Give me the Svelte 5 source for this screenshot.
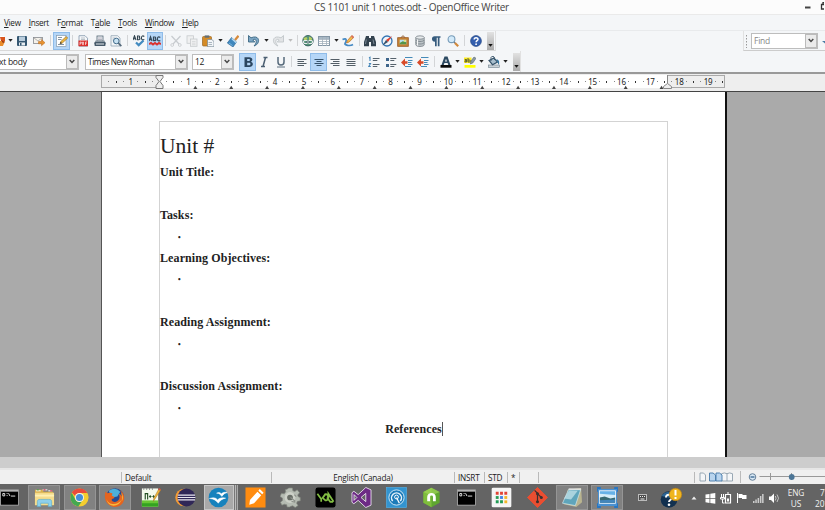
<script>
  // Toolbar glyphs, drawn on a 12 x 12 grid
  const glyphs = {
    newdoc: '<rect x="1" y="1" width="8" height="10" fill="#fff"/><path d="M5 2h5v4H6z" fill="#d8541c"/><path d="M5 6h5l-2 5H5z" fill="#e98d2b"/><path d="M6 5l4 2-2 1z" fill="#963012"/>',
    save: '<rect x="1" y="1" width="10" height="10" rx="1" fill="#355873"/><rect x="3" y="1.500" width="6" height="4.500" fill="#b9cddd"/><rect x="3" y="7.500" width="6" height="3" fill="#e7edf2"/><rect x="4" y="8" width="1.500" height="2.500" fill="#355873"/>',
    mail: '<rect x=".5" y="2.500" width="9" height="6" fill="#f4f1ea" stroke="#85898e" stroke-width=".8"/><path d="M.6 2.700L5 6l4.400-3.300" fill="none" stroke="#999" stroke-width=".7"/><path d="M5.500 6.500h3V4.500l3.500 3.200-3.500 3V8.800h-3z" fill="#e8932f" stroke="#b6651b" stroke-width=".5"/>',
    edit: '<rect x=".5" y=".5" width="9.500" height="11" fill="#fff" stroke="#889db0" stroke-width=".7"/><path d="M2 2.500h4M2 4.500h3.500M2 9.500h6" stroke="#66798a" stroke-width=".8"/><path d="M4 8.800l.8-2.300 5.400-5 1.500 1.600-5.400 5z" fill="#efb73d" stroke="#8d6620" stroke-width=".6"/><path d="M4 8.800l.7-2 1.300 1.400z" fill="#333"/>',
    pdf: '<path d="M2 .7h6l2.500 2.500v8H2z" fill="#f5f7f9" stroke="#8096a9" stroke-width=".8"/><path d="M4 3h4M4 4.500h4" stroke="#a0abb5" stroke-width=".7"/><rect x="1.500" y="5.500" width="9.500" height="5.700" fill="#db2e2b"/><path d="M3 10V7h1.300v1.300H3M5.500 7v2.700h1V7zM8.500 10V7h1.500M8.500 8.500h1" stroke="#fff" stroke-width=".6" fill="none"/>',
    print: '<rect x="3" y="1" width="6" height="5" fill="#f4f6f8" stroke="#526473" stroke-width=".8"/><path d="M4 3h4M4 4.500h4" stroke="#889" stroke-width=".6"/><path d="M1.500 5.500h9L12 9H0z" fill="#8b98a2"/><rect x=".5" y="7" width="11" height="4" rx=".7" fill="#475b6b"/><path d="M2 9h8" stroke="#e5eaee"/>',
    preview: '<path d="M1 .7h6.500L10 3v8H1z" fill="#f2f5f7" stroke="#93a4b2" stroke-width=".8"/><path d="M2.500 3h3M2.500 5h1.500" stroke="#9eabb5" stroke-width=".7"/><circle cx="6.300" cy="6" r="2.800" fill="#c8e2f2" stroke="#426c8c"/><path d="M8.300 8l3 3.200" stroke="#54697a" stroke-width="1.700"/>',
    spell: '<path d="M0 5L1.500.8 3 5M.5 3.700h2M4.500 1v3.700h1.300c1.600 0 1.500-1.700 0-1.900 1.200-.2 1.100-1.800 0-1.800zM11.300 1.500C9.500.2 8.400 1.300 8.400 2.900s1.300 2.700 2.900 1.500" fill="none" stroke="#314450" stroke-width="1.100"/><path d="M3 7.500l2.700 2.600L10.500 5.500" fill="none" stroke="#438bc0" stroke-width="2.200"/>',
    auto: '<path d="M0 6L1.500 1.800 3 6M.5 4.700h2M4.500 2v3.700h1.300c1.600 0 1.500-1.700 0-1.900 1.200-.2 1.100-1.800 0-1.800zM11.300 2.500C9.500 1.200 8.400 2.300 8.400 3.900s1.300 2.700 2.900 1.500" fill="none" stroke="#35495a" stroke-width="1.200"/><path d="M0 9l2-1 2 1.500L6 8l2 1.500L10 8l2 1" fill="none" stroke="#da3330" stroke-width="2"/>',
    cut: '<path d="M1.500 1l7.500 8M10.500 1L3 9" stroke="#c7cbcf" stroke-width="1.200"/><circle cx="2.200" cy="10" r="1.400" fill="none" stroke="#cdd0d3"/><circle cx="9.800" cy="10" r="1.400" fill="none" stroke="#cdd0d3"/>',
    copy: '<rect x="1" y=".8" width="6.500" height="7.500" fill="#eff0f1" stroke="#c7cacd" stroke-width=".8"/><rect x="4.500" y="4" width="6.500" height="7.300" fill="#eff0f1" stroke="#c7cacd" stroke-width=".8"/><path d="M6 6.500h3.500M6 8.200h3.500M6 9.700h3.500" stroke="#d0d2d4" stroke-width=".7"/>',
    paste: '<rect x=".5" y="1.500" width="9" height="9.500" rx="1" fill="#d48b27" stroke="#9b6824" stroke-width=".7"/><rect x="2.700" y=".4" width="4.600" height="2.300" fill="#636e75"/><path d="M5.500 4.500h4.300L12 6.500v5.200H5.500z" fill="#f2f5f8" stroke="#768895" stroke-width=".7"/><path d="M6.500 7.500H10M6.500 9.500H10" stroke="#8d9ca7" stroke-width=".7"/>',
    brush: '<path d="M11.500.8L8 5" stroke="#d78a3b" stroke-width="2.200"/><path d="M4.500 2.500l5 4.500-3.500 5L.3 8z" fill="#3f87bd" stroke="#245f91" stroke-width=".6"/><path d="M4.700 3.500L9.300 7.700" stroke="#b9ddf4" stroke-width="1.300"/><path d="M2 8l3.500 2.500" stroke="#75b4df"/>',
    undo: '<path d="M.5.500v6.500h6.300L4.800 5C8 2.800 10 7 6 11 13 9 12-1 3 2.800z" fill="#7ca6c4" stroke="#3a6682" stroke-width=".9"/>',
    redo: '<path d="M11.500.5v6.500H5.200L7.200 5C4 2.800 2 7 6 11-1 9 0-1 9 2.800z" fill="#e2e4e6" stroke="#c1c6c9" stroke-width=".9"/>',
    globe: '<circle cx="6" cy="5.700" r="5.200" fill="#559579" stroke="#375e60" stroke-width=".9"/><path d="M1.500 3l3-1 1 2-3 2zM7 1.500l3 1.500-.5 3L7 5z" fill="#b6cf63"/><path d="M2.500 8.500a1.600 1.600 0 0 1 0-3h2a1.600 1.600 0 0 1 0 3zM7.500 8.500a1.600 1.600 0 0 1 0-3h2a1.600 1.600 0 0 1 0 3z" fill="none" stroke="#e9ecee" stroke-width="1.100"/><path d="M4 7h4" stroke="#344f5b"/>',
    table: '<rect x=".5" y="1.500" width="11" height="9" fill="#fff" stroke="#8496a5"/><rect x="1" y="2" width="10" height="2" fill="#a8b8c5"/><path d="M.5 4.500h11M.5 6.500h11M.5 8.500h11M4.500 2V11M8.500 2V11" stroke="#a2b0bb" stroke-width=".8"/>',
    draw: '<path d="M.5 4.500C6 2 4 7 3 8.500S8 11.500 11 9.500" fill="none" stroke="#4589c3" stroke-width="1.700"/><path d="M4.500 8l1-2.500 4.300-5 2 1.800L7.200 7z" fill="#f2b94c" stroke="#b86f27" stroke-width=".7"/><path d="M9 1.500l1-1.200 2 1.800-1 1.200z" fill="#da6d62"/>',
    find: '<path d="M2 1h3v2h2V1h3l2 6v4.200H7V7H5v4.200H0V7z" fill="#34434f"/><path d="M2.300 4.500L1.500 9M9 4.500l1 4.500" stroke="#8c9ba7" stroke-width=".8"/>',
    compass: '<circle cx="6" cy="6" r="5" fill="#eef4fa" stroke="#3475b3" stroke-width="1.300"/><path d="M11 1L7 7 5 5z" fill="#e43b28"/><path d="M1.500 10.500L5 5l2 2z" fill="#375069"/>',
    gallery: '<path d="M3.500 3L6 .7 8.500 3" fill="none" stroke="#926135"/><rect x=".7" y="2.700" width="10.600" height="8.600" fill="#c78432" stroke="#985620" stroke-width=".8"/><rect x="2.700" y="4.700" width="6.600" height="4.500" fill="#b8dfed"/><path d="M2.700 9.200V8l3-1.700 3.600 1v1.900z" fill="#559548"/><circle cx="7.800" cy="5.800" r=".9" fill="#f9e54d"/>',
    database: '<path d="M1.800 2.500v7.400C2.500 12 9.500 12 10.200 9.900V2.500" fill="#bcc3c7" stroke="#788288" stroke-width=".8"/><ellipse cx="6" cy="2.500" rx="4.200" ry="1.700" fill="#e6eaec" stroke="#788288" stroke-width=".8"/><path d="M1.800 5c.7 2 7.700 2 8.400 0M1.800 7.500c.7 2 7.700 2 8.400 0" fill="none" stroke="#737e85" stroke-width=".8"/><path d="M3.500 4.500v6" stroke="#f5f6f6"/>',
    pilcrow: '<path d="M10.500 1.200H4.600C1 1.200 1.100 6.700 5 6.700v4.600h1.700V2.700h1.100v8.600h1.700V2.700h1z" fill="#365c7e"/>',
    zoom: '<circle cx="4.500" cy="4.200" r="3.400" fill="#d2eafa" stroke="#769bb8" stroke-width="1.100"/><path d="M7 7l1.500 1.500" stroke="#6c7b86" stroke-width="1.200"/><path d="M8 8l3.200 3.200" stroke="#d2893c" stroke-width="2.200"/>',
    help: '<circle cx="6" cy="6" r="5.400" fill="#345fae" stroke="#234583" stroke-width=".7"/><path d="M4.200 4.600C4.200 2 8 2.300 8 4.200 8 5.700 6.100 5.600 6.100 7.300" fill="none" stroke="#fff" stroke-width="1.500"/><circle cx="6.100" cy="9.200" r=".9" fill="#fff"/>',
    bold: '<path fill-rule="evenodd" d="M2.500 1.200h4.700c4 0 3.900 4 1.500 4.500C12 6.300 11.500 11 7.300 11H2.500zM5.200 3v2h1.500C8.500 5 8.500 3 6.700 3zm0 3.700v2.500H7c2 0 2-2.500 0-2.500z" fill="#2b4660"/>',
    italic: '<path d="M5.500 1.500h4M3 10.500h4M7.500 1.500l-2.500 9" fill="none" stroke="#4b5f72" stroke-width="1.500"/>',
    underline: '<path d="M3 1v5c0 4 6 4 6 0V1" fill="none" stroke="#566a7b" stroke-width="1.500"/><path d="M2 11h8" stroke="#5c6f7f"/>',
    left: '<path d="M1.500 3.500h9M1.500 5.500h6.500M1.500 7.500h9M1.500 9.500h6.500" stroke="#535e67" stroke-width="1.200"/>',
    center: '<path d="M1.500 3.500h9M3.500 5.500h5M1.500 7.500h9M3.500 9.500h5" stroke="#36536d" stroke-width="1.200"/>',
    right: '<path d="M1.500 3.500h9M4 5.500h6.500M1.500 7.500h9M4 9.500h6.500" stroke="#535e67" stroke-width="1.200"/>',
    justify: '<path d="M1.500 3.500h9M1.500 5.500h9M1.500 7.500h9M1.500 9.500h9" stroke="#535e67" stroke-width="1.200"/>',
    numbers: '<path d="M1 2l1-.7V5M.8 7.500h1.700L.8 10.500h2" fill="none" stroke="#4485b8" stroke-width="1.100"/><path d="M4.800 2.500h6.700M4.800 4.500h4.500M4.800 8.500h6.700M4.800 10.500h4.500" stroke="#56626c"/>',
    bullets: '<path d="M1 2h3v3H1zM1 8h3v3H1z" fill="#3d648a"/><path d="M5.300 2.500h6M5.300 4.500h4M5.300 8.500h6M5.300 10.500h4" stroke="#56626c"/>',
    outdent: '<path d="M4 1.500h7.500M7 4.500h4.500M7 6.500h3.500M7 8.500h4.500M4 10.500h6" stroke="#458ab8" stroke-width="1.200"/><path d="M0 6.500L4 2.500v2.700h2.500v2.600H4v2.700z" fill="#d84a28"/>',
    indent: '<path d="M4 1.500h7.500M7 4.500h4.500M7 6.500h3.500M7 8.500h4.500M4 10.500h6" stroke="#458ab8" stroke-width="1.200"/><path d="M0 6.500L4 2.500v2.700h2.500v2.600H4v2.700z" fill="#d84a28"/>',
    fontcolor: '<path fill-rule="evenodd" d="M4.500.5h3L10.500 9H8.300L7.600 7H4.400l-.7 2H1.500zM6 2.800L5 5.400h2z" fill="#2c4961"/><rect x=".5" y="9" width="11" height="2.700" fill="#0a0a0a"/>',
    highlight: '<rect x=".5" y="9" width="11" height="2.700" fill="#ffff00"/><rect x="0" y="1.500" width="7.500" height="5.500" fill="#ffed22"/><path d="M.8 3.500h1.800V6H1V4.700h1.400M4 2v4h1.300c1.500 0 1.500-2 0-2H4" fill="none" stroke="#4e5637" stroke-width=".9"/><path d="M6.300 8l.7-3 3-4 2 1.300-3 4.500z" fill="#8b9aa4" stroke="#58676f" stroke-width=".6"/>',
    bucket: '<rect x=".5" y="9" width="11" height="2.500" fill="#c9d1d7" stroke="#71828e" stroke-width=".6"/><path d="M1 4.500L6 2l3.500 4L4.500 8.700z" fill="#a9bfce" stroke="#36536a" stroke-width="1.200"/><path d="M3 5V1.500C3.500-.3 6.500.2 6.500 2v2" fill="none" stroke="#415c70"/><path d="M8.500 3.300c2.700.5 3 2.500 2.500 5.500-1.500-1-1-2.700-2-3.500z" fill="#3978a4"/>'
  };

  // [name, slot width, state]
  const standardBar = [
    ['newdoc', 15], ['arrow', 5], ['save', 18], ['mail', 16], ['sep', 6], ['edit', 17, 'on'], ['sep', 5],
    ['pdf', 16], ['print', 17], ['preview', 16], ['sep', 7], ['spell', 16], ['auto', 16, 'on'], ['sep', 5],
    ['cut', 16], ['copy', 16], ['paste', 16], ['arrow', 9], ['brush', 16], ['sep', 5], ['undo', 16], ['arrow', 8],
    ['redo', 16], ['arrow', 8, 'dim'], ['sep', 6], ['globe', 16], ['table', 16], ['arrow', 8], ['draw', 16],
    ['sep', 6], ['find', 16], ['compass', 17], ['gallery', 16], ['database', 17], ['pilcrow', 16], ['zoom', 17],
    ['sep', 6], ['help', 17]
  ];
  const formatBar = [
    ['bold', 17, 'on'], ['italic', 16], ['underline', 17], ['sep', 5], ['left', 16], ['center', 17, 'on'],
    ['right', 16], ['justify', 16], ['sep', 6], ['numbers', 17], ['bullets', 17], ['outdent', 16], ['indent', 16],
    ['sep', 6], ['fontcolor', 17], ['arrow', 7], ['highlight', 17], ['arrow', 7], ['bucket', 17], ['arrow', 7]
  ];

  const menus = [['V', 'iew', ''], ['I', 'nsert', ''], ['o', 'rmat', 'F'], ['a', 'ble', 'T'], ['T', 'ools', ''], ['W', 'indow', ''], ['H', 'elp', '']];

  // Ruler geometry: one unit is 28.87px, default tab stops every 35.86px
  const unit = 28.87;
  const origin = 58.5;
  const rulerMarks = [];
  for (let q = -7; q <= 78; q++) {
    if (q !== 0) rulerMarks.push({ x: origin + (q * unit) / 4, q });
  }
  const tabs = Array.from({ length: 14 }, (_, i) => origin + (i + 1) * 35.86);

  const lines = [
    'Unit Title:', '', 'Tasks:', '•', 'Learning Objectives:', '•', '', 'Reading Assignment:', '•', '',
    'Discussion Assignment:', '•'
  ];

  // Taskbar artwork on a 22 x 22 grid
  const apps = {
    cmd: '<rect x="1.500" y="3" width="19" height="16" fill="#000" stroke="#b9b9b9" stroke-width=".8"/><rect x="2" y="3.300" width="18" height="1.500" fill="#ccc"/><path d="M4 6.800h2v2.500H4zM8 6.800h1M8 9h1M10 6.500l1.500 3M12.500 9.500h4.500" fill="none" stroke="#e4e4e4" stroke-width="1"/>',
    explorer: '<path d="M1 3h8l1 2h10v14H1z" fill="#d9ae4b"/><path d="M2 4h5M9 3h5M15 4h4" stroke="#fff"/><path d="M3 3h2" stroke="#37a84a"/><path d="M10 3h2M17 4h2" stroke="#d24"/><path d="M1 6h20v13H1z" fill="#f5dc8c"/><path d="M1 9h20" stroke="#fff0b4" stroke-width="2"/><path d="M3.500 20.500v-5c0-2 1-2.500 3-2.500h9c2 0 3 .5 3 2.500v5h-3.500v-3.500H7v3.500z" fill="#8ed0eb" stroke="#5eafcf" stroke-width=".7"/>',
    chrome: '<circle cx="11" cy="11" r="9.500" fill="#f4cd2f"/><path d="M11 1.500a9.500 9.500 0 0 1 8.200 4.700H11a4.800 4.800 0 0 0-4.600 3.300L3 5.800A9.500 9.500 0 0 1 11 1.500z" fill="#e84b3c"/><path d="M2.900 6A9.500 9.500 0 0 0 9.700 20.400L13.600 15A4.800 4.800 0 0 1 6.800 13.300z" fill="#44a852"/><circle cx="11" cy="11" r="4.700" fill="#f5f5f5"/><circle cx="11" cy="11" r="3.700" fill="#438eda"/>',
    firefox: '<circle cx="11.500" cy="10.500" r="9.300" fill="#244a93"/><path d="M5 4q7-5 12 1l-3 5-6 1z" fill="#4db0dc"/><path d="M1.500 5L4 6.500C6 5.500 8 6 9 7L8 9l3 1.500c-.5 2.500-3 1-3 3.500 2 3 7 1.500 8-2 .7-2.500 0-4-.5-5 1.500 0 2.500 1.500 3 3 .5-3-.5-5-2-6.500C23 6.500 23 18 14.500 20.500 5 22.500-1 15 1.500 5z" fill="#e4641f"/><path d="M2.500 12c2 8 12 7 15.500 2-2 7-14 8.500-15.500-2zM18 6c2.500 3 2 7 .5 9 .5-3 .5-6-.5-9z" fill="#f8b83c"/>',
    notepadpp: '<path d="M2 1.500h17v19H2z" fill="#f4faed"/><path d="M2 14h17v6.500H2z" fill="#69c735"/><path d="M2 17h17v3.500H2z" fill="#34a321"/><path d="M4 1v2M7 1v2M10 1v2M13 1v2" stroke="#888"/><path d="M5.500 13V7h2.500v6M9.500 10h2.500M10.700 8.700v2.600M13 10h2.500M14.200 8.700v2.600" fill="none" stroke="#245123" stroke-width="1.200"/><path d="M14 15l.5-3.500L20 1.500l2 1.300-6.500 10z" fill="#f0b638" stroke="#9d7124" stroke-width=".5"/><path d="M19 2.500l1-1.500 2 1.300-1 1.500z" fill="#c6514b"/>',
    eclipse: '<circle cx="9.500" cy="11" r="9.200" fill="#f29a34"/><circle cx="12" cy="11" r="9.400" fill="#302757"/><path d="M3 8.500h18M2.700 11h18.700M3 13.500h18" stroke="#e8e6ef" stroke-width="1.300"/>',
    writer: '<circle cx="11" cy="11" r="10.300" fill="#1682bd"/><path d="M9 6.500c2-1.500 3.700-.8 5 .7 1.700-1.800 3.500-2 6-1.300-2.400.3-4 1.800-5.500 4-1.300-2-3-3.500-5.500-3.400zM1.500 12c4.500-1.500 7-.7 8.500 1.500 2-2.200 5-2.700 8.500-1.800-3.500.6-6 2.500-7.700 5.300C8.500 14 6 12.500 1.500 12z" fill="#fff" stroke="#fff" stroke-width=".5"/>',
    pencil: '<rect x=".5" y=".5" width="21" height="21" fill="#ff8c10"/><path d="M4.500 18.500l.7-5L13 5l4 3.700-7.500 8.300zM14 4l1.500-1.800 4 3.700L18 7.700z" fill="#fff"/>',
    gear: '<path d="M9 1h4l.5 3 2 .8L18 3l2.500 3-2 2.500.7 1.800 2 .7v3.500l-3 .5-.8 2 1.500 2.500-3 2-2.500-1.800-2 .5L10 21H7.500L7 18.500 4.500 18 2 19l-1.500-3L2.800 14 2.500 11.500 0 10l1.500-3.300 3 .5L6 5 5.500 3 8 2z" fill="#b5bbb2" stroke="#83887f" stroke-width=".7"/><circle cx="10.500" cy="11" r="5.700" fill="#cdd1c8"/><circle cx="10.500" cy="11" r="3" fill="#686d66"/><path d="M11 11l5 4M15 8l2 2M12 15l4 1" stroke="#8c918a" stroke-width="1.200"/>',
    yda: '<rect x=".5" y=".5" width="21" height="21" rx="2.500" fill="#000"/><path d="M2.500 7l4 5.500v3M11 7L7.500 12M8 11.500l3-4c3.500-.7 3.500 7.500 0 6.500zM19.500 15.500L14 7v5M19 15.500h-3L12.500 11" fill="none" stroke="#82bd43" stroke-width="1.800"/>',
    vs: '<path d="M15.500.5L21 3v16l-5.500 2.500-8-7.500L3 17.500 1 16V6l2-1.500L7.500 8zM3.200 8v6l3-3zM15.500 6.700L10.500 11l5 4.300z" fill="#6d2a85" fill-rule="evenodd" stroke="#f0e7f5" stroke-width=".9"/>',
    dial: '<rect x=".5" y=".5" width="21" height="21" fill="#3394d0" stroke="#51afe6" stroke-width=".7"/><circle cx="11" cy="11" r="8" fill="#1c7bb9" stroke="#e8f4fc" stroke-width=".9"/><path d="M7 14.700a5.200 5.200 0 1 1 8 0" fill="none" stroke="#e8f4fc" stroke-width="1.500"/><circle cx="11" cy="10.500" r="2" fill="none" stroke="#fff"/><path d="M11 11l3 6" stroke="#fff" stroke-width="1.300"/>',
    green: '<path d="M11 .7l8.500 4.500v11.300L11 21.300 2.500 16.500V5.200z" fill="#5fa62f"/><path d="M11 .7v20.600L2.500 16.500V5.200z" fill="#7fbd3c"/><path d="M11 .7l8.500 4.500L11 9 2.500 5.200z" fill="#a2d65a" opacity=".7"/><path d="M6.500 15V10.500c0-5.500 9-5.500 9 0V15h-3v-4.500c0-2-3-2-3 0V15z" fill="#fff"/>',
    grid: '<rect x=".7" y=".7" width="20.600" height="20.600" rx="1.500" fill="#f5f5f5"/><path d="M5 5h3v3H5zM9.500 5h3v3h-3zM14 5h3v3h-3z" fill="#e24334"/><path d="M5 9.500h3v3H5z" fill="#2a9d58"/><path d="M9.500 9.500h3v3h-3z" fill="#3e82e4"/><path d="M14 9.500h3v3h-3z" fill="#f4b728"/><path d="M5 14h3v3H5zM9.500 14h3v3h-3z" fill="#219b55"/><path d="M14 14h3v3h-3z" fill="#f4b728"/>',
    git: '<path d="M11 .5L21.500 11 11 21.500.5 11z" fill="#e94e31" stroke="#e94e31" stroke-width="1" stroke-linejoin="round"/><path d="M8 3.500l3 3v9M11 7l4 4" fill="none" stroke="#3c302e" stroke-width="1.300"/><circle cx="11" cy="7" r="1.600" fill="#3c302e"/><circle cx="15" cy="11" r="1.600" fill="#3c302e"/><circle cx="11" cy="15.500" r="1.600" fill="#3c302e"/>',
    notepad: '<path d="M6 3l14-2 1 15-6 5-13-3z" fill="#b9b48f"/><path d="M7 2.500l12.500.5L14 19.500.500 17z" fill="#5fa5bb" stroke="#d7eaf0" stroke-width=".7"/><path d="M7.500 3.500l9 .5-7 9-7.500-1z" fill="#c3e3ea" opacity=".75"/><path d="M7 2.200h13" stroke="#e6e6e6" stroke-width="1.500"/>',
    picture: '<path d="M1 2h20v18H1z" fill="#4a91d2"/><rect x="2.500" y="4" width="17" height="13" fill="#d5edf8" stroke="#fff" stroke-width=".8"/><path d="M3 4.500h16v4L3 7z" fill="#66b2e7"/><path d="M3 11l5-1 6 2 5-1v5.500H3z" fill="#376a72"/><path d="M3 14l16-1v3.500H3z" fill="#4386bd"/><path d="M0 5V1h4M18 1h4v4M0 17v4h4M18 21h4v-4" fill="none" stroke="#2776c3" stroke-width="2"/>'
  };
  const taskbar = [
    ['cmd', ''], ['explorer', 'open'], ['chrome', 'open'], ['firefox', 'open'], ['notepadpp', ''], ['eclipse', ''],
    ['writer', 'open active'], ['pencil', ''], ['gear', ''], ['yda', ''], ['vs', ''], ['dial', ''], ['green', ''],
    ['cmd', ''], ['grid', ''], ['git', ''], ['notepad', 'open'], ['picture', 'open']
  ];
</script>

{#snippet bar(items)}
  {#each items as [name, width, state]}
    <span class="slot {state ?? ''}" style:width="{width}px">
      {#if name === 'sep'}
        <i class="sep"></i>
      {:else if name === 'arrow'}
        <svg width="5" height="3" viewBox="0 0 5 3"><path d="M.3 0h4.400L2.500 2.800z" fill={state === 'dim' ? '#bbb' : '#222'} /></svg>
      {:else}
        <svg width="12" height="12" viewBox="0 0 12 12">{@html glyphs[name]}</svg>
      {/if}
    </span>
  {/each}
{/snippet}

{#snippet grip()}
  <span class="grip"><svg width="5" height="3" viewBox="0 0 5 3"><path d="M.3 0h4.400L2.500 2.800z" fill="#111" /></svg></span>
{/snippet}

{#snippet combo(text, width, cls)}
  <div class="combo {cls}" style:width="{width}px">
    <span>{text}</span>
    <b><svg width="6" height="5" viewBox="0 0 6 5"><path d="M.7 1L3 3.500 5.300 1" fill="none" stroke="#484848" stroke-width="1.500" /></svg></b>
  </div>
{/snippet}

<div class="window">
  <header class="title">
    <span>CS 1101 unit 1 notes.odt - OpenOffice Writer</span>
    <svg class="controls" width="20" height="14" viewBox="0 0 20 14">
      <path d="M1 7.500h5.500" stroke="#444" stroke-width="2" />
      <path d="M17.500 4.500h5V9h-5zM19 4V2.700h4" fill="none" stroke="#333" stroke-width="1.300" />
    </svg>
  </header>

  <nav>
    {#each menus as [key, rest, before]}
      <span>{before}<u>{key}</u>{rest}</span>
    {/each}
  </nav>

  <div class="tools">
    <div class="strip standard">{@render bar(standardBar)}{@render grip()}</div>
    <div class="search">
      <svg width="3" height="14" viewBox="0 0 3 14"><path d="M1.500 1v13" stroke="#999" stroke-dasharray="1.500 1.500" /></svg>
      {@render combo('Find', 67, 'find')}
      <svg width="8" height="12" viewBox="0 0 8 12"><path d="M4 2h3v4h3L6 10 1 6h3z" fill="#4b7ca5" /></svg>
    </div>
  </div>
  <div class="strip format">
    {@render combo('Text body', 92, 'style')}
    {@render combo('Times New Roman', 103, 'font')}
    {@render combo('12', 42, 'size')}
    {@render bar(formatBar)}{@render grip()}
  </div>

  <div class="rulerbar">
    <svg width="624" height="17" viewBox="0 0 624 17">
      <rect x=".5" y="1.500" width="623" height="12" fill="#eee" stroke="#a9a9a9" />
      <rect x="58.500" y="1" width="508" height="13" fill="#fff" />
      {#each rulerMarks as m}
        {#if m.q % 4 === 0}
          <text x={m.x} y="10.800" text-anchor="middle">{Math.abs(m.q / 4)}</text>
        {:else}
          <rect x={Math.round(m.x - 0.5)} y="7" width="1" height={m.q % 2 ? 1 : 2} fill={m.q % 2 ? '#888' : '#333'} />
        {/if}
      {/each}
      {#each tabs as x}
        <path d="M{x - 2} 15h4L{x} 11.700z" fill="#444" />
      {/each}
      <path d="M55 1.500h7v2l-3 4 3 4v3h-7v-3l3-4-3-4z" fill="#eee" stroke="#777" />
      <path d="M566.500 1v8.500l-4 3v2h8v-2l-4-3" fill="#eee" stroke="#888" />
    </svg>
  </div>

  <main>
    <article>
      <section>
        <h1>Unit #</h1>
        {#each lines as line}
          <p class:bullet={line === '•'}>{line}</p>
        {/each}
        <p class="refs"><span>References</span></p>
      </section>
    </article>
  </main>
  <div class="hscroll"></div>

  <footer class="status">
    <span class="cell" style:width="122px"></span>
    <span class="cell" style:width="150px">Default</span>
    <span class="cell mid" style:width="183px">English (Canada)</span>
    <span class="cell" style:width="30px">INSRT</span>
    <span class="cell" style:width="23px">STD</span>
    <span class="cell" style:width="12px">*</span>
    <span class="cell" style:width="19px"></span>
    <span class="cell" style:width="156px"></span>
    <svg width="130" height="12" viewBox="0 0 130 12">
      <g fill="#f4f6f8" stroke="#8f9fad" stroke-width=".9">
        <path d="M5 2h3.500l2 2v6H5zM32 2.700q-2.500-1.500-5.500 0V10h11V2.700q-3-1.500-5.500 0zM32 2.700V10" />
        <path d="M15 2h3.500l2.500 2v6h-6zM21.500 2H25l2.500 2v6h-6z" transform="translate(-.5)" fill="#b8d4ee" stroke="#4479a9" />
      </g>
      <path d="M45.500 0v12" stroke="#bbb" />
      <circle cx="57.500" cy="6" r="3.300" fill="#d8e8f5" stroke="#66819a" />
      <path d="M55.500 6h4" stroke="#35628b" stroke-width="1.300" />
      <path d="M64.500 5.500h66M75.500 2v7M96.500 2v7" stroke="#999" />
      <circle cx="96.700" cy="6" r="2.900" fill="#4c7596" />
    </svg>
  </footer>

  <div class="taskbar">
    <div class="apps">
      {#each taskbar as [name, state]}
        <span class="app"><span class="btn {state}"><svg width="21" height="21" viewBox="0 0 22 22">{@html apps[name]}</svg></span></span>
      {/each}
    </div>
    <svg class="tray" width="152" height="27" viewBox="630 483 152 27">
      <rect x="638.500" y="493.500" width="8" height="6" fill="#4c4c4c" stroke="#bbb" />
      <path d="M640 495.500h1M642 495.500h1M644 495.500h1M640.500 498h4" stroke="#eee" />
      <circle cx="669" cy="498.500" r="8.300" fill="#12304f" />
      <path d="M661.500 495q6-8 13 0l-4 2z" fill="#397ab1" opacity=".7" />
      <path d="M666 496.500c0-4 6-3.500 6 0 0 2.500-3 2-3 4.500" fill="none" stroke="#fff" stroke-width="2" />
      <circle cx="669" cy="503.700" r="1.300" fill="#fff" />
      <circle cx="675.500" cy="493.500" r="6.200" fill="#efb51e" stroke="#bd8318" stroke-width=".7" />
      <path d="M675.500 489v5.500M675.500 496v2" stroke="#fff" stroke-width="2" />
      <path d="M691.500 498.500h5l-2.500-3z" fill="#eee" />
      <path d="M705.500 493.500l4-.6v4.100h-4zM710.300 492.800l5-.7v4.900h-5zM705.500 497.800h4v4.100l-4-.6zM710.300 497.800h5v4.900l-5-.7z" fill="#fff" />
      <path d="M725.500 493.500h5v8.500h-5zM727 492h2" fill="none" stroke="#fff" stroke-width="1.200" />
      <path d="M721.500 493v3M723.500 493v3M720.500 496.500h4v1.500h-4zM722.500 498v4h2" fill="none" stroke="#fff" />
      <path d="M727 497.500h2v3h-2z" fill="#fff" />
      <path d="M737.500 492v10" stroke="#fff" />
      <path d="M738.500 493h4v1h4v4h-4.500v-1h-3.500z" fill="#fff" />
      <path d="M753 500v2h1.500v-2zM755.300 498.500v3.500h1.500v-3.500zM757.600 497v5h1.500v-5zM759.900 495v7h1.500v-7z" fill="#ccc" />
      <path d="M762.200 493v9h1.300v-9z" fill="#ddd" />
      <path d="M769 495.500h2l3-3v9.500l-3-3h-2z" fill="#fff" />
      <path d="M775.300 495q1.500 2.200 0 4.500M777 493.500q3 3.700 0 7.500" fill="none" stroke="#ddd" stroke-width=".8" />
    </svg>
    <div class="lang"><span>ENG</span><span>US</span></div>
    <div class="clock"><span>7:12</span><span>2014</span></div>
  </div>
</div>

<style>
  :global(body) { overflow: hidden; }
  .window { width: 825px; height: 510px; overflow: hidden; display: flex; flex-direction: column; background: #f4f6f8; font: 8.5px/12px "Open Sans", "Noto Sans", sans-serif; letter-spacing: -0.25px; color: #222; }
  .window > * { flex: none; }
  svg { display: block; flex: none; }
  .title { height: 14px; background: #fcfcfc; border-bottom: 1px solid #eaeaea; display: flex; align-items: center; font-size: 10px; letter-spacing: -0.27px; color: #444; white-space: nowrap; }
  .title span { margin-left: 314px; width: 490px; flex: none; }
  nav { height: 15px; box-sizing: border-box; padding: 2px 0 0 4px; display: flex; gap: 8px; font-size: 8.2px; letter-spacing: -0.3px; }
  nav u { text-underline-offset: 1px; }
  .tools { height: 21px; display: flex; justify-content: space-between; border-top: 1px solid #e8eaec; box-sizing: border-box; }
  .strip { display: flex; align-items: center; }
  .standard { width: 503px; margin-left: -7px; height: 20px; box-sizing: border-box; border-bottom: 1px solid #d8d8d8; border-right: 1px solid #dedede; }
  .slot { height: 18px; display: flex; align-items: center; justify-content: center; flex: none; }
  .slot.on { background: #b5d6f7; box-shadow: inset 0 0 0 1px #8fbce9; }
  .sep { width: 1px; height: 11px; background: #d3d5d7; }
  .grip { width: 7px; height: 18px; margin-left: 3px; background: linear-gradient(#e2e2e2, #aaa); display: flex; align-items: flex-end; justify-content: center; padding-bottom: 3px; box-sizing: border-box; flex: none; }
  .search { width: 82px; height: 20px; box-sizing: border-box; border-left: 1px solid #e1e1e1; border-bottom: 1px solid #ccc; display: flex; align-items: center; padding-left: 1px; gap: 3px; overflow: hidden; }
  .combo { height: 16px; box-sizing: border-box; border: 1px solid #bdbdbd; background: #fff; display: flex; justify-content: space-between; align-items: center; padding-left: 2px; flex: none; white-space: nowrap; }
  .combo b { width: 12px; height: 14px; box-sizing: border-box; border: 1px solid #bbb; background: #ebebeb; display: flex; align-items: center; justify-content: center; flex: none; }
  .combo.find { color: #888; }
  .combo.style { margin-left: -13px; }
  .combo.font { margin-left: 6px; font-size: 8.3px; letter-spacing: -0.4px; }
  .combo.size { margin: 0 5px 0 4px; }
  .format { height: 21px; width: 521px; box-sizing: border-box; border-right: 1px solid #e1e1e1; }
  .format .grip { margin-left: 4px; }
  .rulerbar { height: 20px; box-sizing: border-box; border-top: 2px solid #999; border-bottom: 1px solid #444; background: #eee; padding-left: 101px; }
  .rulerbar text { font: 8px "Noto Sans", sans-serif; letter-spacing: -0.2px; fill: #222; }
  main { height: 365px; background: #aaa; overflow: hidden; padding-left: 101px; }
  article { width: 624px; height: 365px; background: #fff; box-sizing: border-box; border-left: 1px solid #555; padding: 29px 0 0 57px; box-shadow: 2px 0 0 #111; }
  section { width: 509px; height: 336px; box-sizing: border-box; border: 1px solid #d3d3d3; border-bottom: 0; font-family: "Liberation Serif", "Times New Roman", serif; }
  h1 { margin: 0; padding-top: 12px; height: 28.400px; box-sizing: content-box; font-size: 21.5px; line-height: 24px; font-weight: 400; letter-spacing: 0; color: #222; }
  p { margin: 0; height: 21.42px; font-size: 12px; line-height: 21.42px; font-weight: 700; letter-spacing: 0.1px; color: #222; }
  p.bullet { padding-left: 18px; font-size: 7.5px; }
  p.refs { text-align: center; padding-left: 1px; }
  p.refs span { border-right: 1px solid #555; }
  .hscroll { height: 13px; box-sizing: border-box; background: #cdcdcd; border-bottom: 2px solid #e6e6e6; }
  .status { height: 14px; background: #f0f0f0; display: flex; align-items: center; font-size: 8.2px; letter-spacing: -0.2px; white-space: nowrap; }
  .cell { height: 11px; line-height: 12px; border-right: 1px solid #b9b9b9; box-sizing: border-box; padding-left: 3px; flex: none; }
  .cell.mid { text-align: center; padding-left: 0; }
  .taskbar { height: 27px; background: #646464; display: flex; overflow: hidden; color: #f2f2f2; }
  .apps { width: 630px; display: flex; flex: none; overflow: hidden; }
  .app { width: 35.2px; flex: none; display: flex; justify-content: center; padding-top: 1px; }
  .app:first-child { margin-left: -8.300px; }
  .btn { width: 32px; height: 25px; box-sizing: border-box; display: flex; align-items: center; justify-content: center; border: 1px solid transparent; flex: none; }
  .btn.open { background: #818181; border-color: #959595; }
  .btn.active { width: 30px; margin-right: 3px; background: #a9a9a9; border-color: #c8c8c8; box-shadow: 1px 0 0 #777, 2px 0 0 #bbb, 3px 0 0 #777, 4px 0 0 #aaa; }
  .lang, .clock { display: flex; flex-direction: column; font-size: 8.3px; line-height: 11px; padding-top: 3px; flex: none; white-space: nowrap; letter-spacing: -0.1px; }
  .lang { width: 28px; align-items: center; }
  .clock { width: 24px; margin-left: 5px; }
  .clock span:first-child { padding-left: 5px; }
</style>
